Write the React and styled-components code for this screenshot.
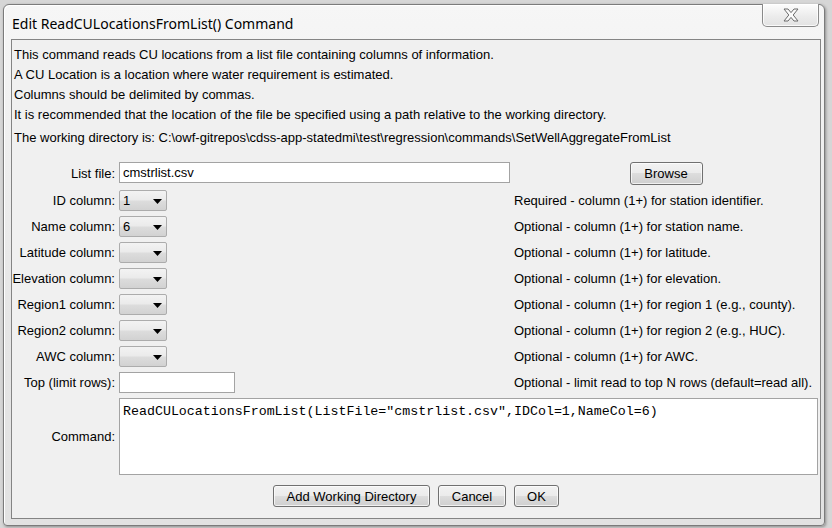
import React from 'react';
import styled, { createGlobalStyle } from 'styled-components';

const GlobalStyle = createGlobalStyle`
  html, body {
    margin: 0;
    padding: 0;
    background: #d6d6d6;
  }
  body {
    font-family: "Liberation Sans", Arial, sans-serif;
    font-size: 13px;
    color: #000;
  }
`;

const intro = [
  'This command reads CU locations from a list file containing columns of information.',
  'A CU Location is a location where water requirement is estimated.',
  'Columns should be delimited by commas.',
  'It is recommended that the location of the file be specified using a path relative to the working directory.',
];

const columns = [
  { label: 'ID column:', value: '1', desc: 'Required - column (1+) for station identifier.' },
  { label: 'Name column:', value: '6', desc: 'Optional - column (1+) for station name.' },
  { label: 'Latitude column:', value: '', desc: 'Optional - column (1+) for latitude.' },
  { label: 'Elevation column:', value: '', desc: 'Optional - column (1+) for elevation.' },
  { label: 'Region1 column:', value: '', desc: 'Optional - column (1+) for region 1 (e.g., county).' },
  { label: 'Region2 column:', value: '', desc: 'Optional - column (1+) for region 2 (e.g., HUC).' },
  { label: 'AWC column:', value: '', desc: 'Optional - column (1+) for AWC.' },
];

function CloseGlyph() {
  return (
    <svg width="16" height="14" viewBox="0 0 16 14">
      <polygon
        points="1,1 5,1 8,4.6 11,1 15,1 10.2,7 15,13 11,13 8,9.4 5,13 1,13 5.8,7"
        fill="#fbfbfb"
        stroke="#6b6b6b"
        strokeWidth="1"
        strokeLinejoin="round"
      />
    </svg>
  );
}

function ArrowDown() {
  return (
    <svg width="9" height="5" viewBox="0 0 9 5">
      <polygon points="0,0 9,0 4.5,5" fill="#000" />
    </svg>
  );
}

function Combo({ value }) {
  return (
    <ComboBox>
      <span>{value}</span>
      <ArrowDown />
    </ComboBox>
  );
}

export default function App() {
  return (
    <Screen>
      <GlobalStyle />
      <Window>
        <TitleBar>
          <Title>Edit ReadCULocationsFromList() Command</Title>
          <CloseButton>
            <CloseGlyph />
          </CloseButton>
        </TitleBar>
        <Panel>
          <Intro>
            {intro.map((line) => (
              <Line key={line}>{line}</Line>
            ))}
            <Line $gap>
              The working directory is: C:\owf-gitrepos\cdss-app-statedmi\test\regression\commands\SetWellAggregateFromList
            </Line>
          </Intro>

          <Form>
            <Label>List file:</Label>
            <TextInput $w={391} readOnly value="cmstrlist.csv" />
            <BrowseButton>Browse</BrowseButton>

            {columns.map((c) => (
              <React.Fragment key={c.label}>
                <Label>{c.label}</Label>
                <Combo value={c.value} />
                <Desc>{c.desc}</Desc>
              </React.Fragment>
            ))}

            <Label>Top (limit rows):</Label>
            <TextInput $w={116} readOnly value="" />
            <Desc>Optional - limit read to top N rows (default=read all).</Desc>

            <Label>Command:</Label>
            <CommandArea
              readOnly
              value={'ReadCULocationsFromList(ListFile="cmstrlist.csv",IDCol=1,NameCol=6)'}
            />
          </Form>

          <ButtonRow>
            <Button $w={157}>Add Working Directory</Button>
            <Button $w={68}>Cancel</Button>
            <Button $w={45}>OK</Button>
          </ButtonRow>
        </Panel>
      </Window>
    </Screen>
  );
}

const Screen = styled.div`
  width: 832px;
  height: 528px;
  box-sizing: border-box;
  padding: 4px 0 0 3px;
  overflow: hidden;
  background: #d6d6d6;
`;

const Window = styled.div`
  width: 822px;
  height: 522px;
  box-sizing: border-box;
  border: 1px solid #7b7b7b;
  border-radius: 6px 6px 4px 4px;
  background: linear-gradient(#f6f6f6, #e6e6e6 60%, #e2e2e2);
  box-shadow: 1px 1px 3px rgba(0, 0, 0, 0.35), inset 1px 1px 0 #ffffff;
  padding: 0 3px 6px 7px;
  display: flex;
  flex-direction: column;
`;

const TitleBar = styled.div`
  height: 34px;
  display: flex;
  justify-content: space-between;
  align-items: flex-start;
`;

const Title = styled.div`
  padding: 9px 0 0 1px;
  font-family: "Noto Sans", "Open Sans", sans-serif;
  font-size: 14px;
  line-height: 20px;
  color: #000;
`;

const CloseButton = styled.div`
  width: 57px;
  height: 23px;
  margin: -1px 2px 0 0;
  box-sizing: border-box;
  border: 1px solid #8a8a8a;
  border-top: none;
  border-radius: 0 0 5px 5px;
  background: linear-gradient(#fdfdfd, #ececec 55%, #e2e2e2);
  box-shadow: inset 0 0 0 1px rgba(255, 255, 255, 0.8);
  display: flex;
  align-items: center;
  justify-content: center;
`;

const Panel = styled.div`
  flex: 1;
  border: 1px solid #848484;
  background: #f0f0f0;
  display: flex;
  flex-direction: column;
`;

const Intro = styled.div`
  padding: 5px 0 0 2px;
`;

const Line = styled.div`
  height: 20px;
  line-height: 20px;
  white-space: nowrap;
  margin-top: ${(p) => (p.$gap ? '3px' : '0')};
`;

const Form = styled.div`
  margin-top: 14px;
  padding-right: 2px;
  display: grid;
  grid-template-columns: 103px 391px 1fr;
  column-gap: 4px;
  row-gap: 5px;
  align-items: start;
`;

const Label = styled.div`
  text-align: right;
  align-self: center;
  white-space: nowrap;
`;

const Desc = styled.div`
  align-self: center;
  white-space: nowrap;
`;

const TextInput = styled.input`
  width: ${(p) => p.$w}px;
  height: 21px;
  box-sizing: border-box;
  margin: 0;
  padding: 0 3px;
  border: 1px solid #a3a3a3;
  background: #fff;
  font: inherit;
  color: #000;
  outline: none;
`;

const winButton = `
  box-sizing: border-box;
  margin: 0;
  padding: 0;
  border: 1px solid #707070;
  border-radius: 3px;
  background: linear-gradient(#f2f2f2 0%, #ebebeb 50%, #dddddd 50%, #cfcfcf 100%);
  box-shadow: inset 0 0 0 1px rgba(255, 255, 255, 0.7);
  font: inherit;
  color: #000;
`;

const BrowseButton = styled.button`
  ${winButton}
  justify-self: center;
  width: 73px;
  height: 23px;
`;

const Button = styled.button`
  ${winButton}
  width: ${(p) => p.$w}px;
  height: 22px;
`;

const ComboBox = styled.div`
  width: 48px;
  height: 21px;
  box-sizing: border-box;
  border: 1px solid #acacac;
  border-radius: 2px;
  background: linear-gradient(#f3f3f3 0%, #ebebeb 45%, #dcdcdc 55%, #d2d2d2 100%);
  display: flex;
  align-items: center;
  justify-content: space-between;
  padding: 0 4px 0 3px;

  svg {
    margin-top: 1px;
  }
`;

const CommandArea = styled.textarea`
  grid-column: 2 / 4;
  height: 77px;
  box-sizing: border-box;
  margin: 0;
  padding: 5px 3px 3px;
  border: 1px solid #a3a3a3;
  background: #fff;
  resize: none;
  outline: none;
  font-family: "Liberation Mono", "DejaVu Sans Mono", monospace;
  font-size: 13.3px;
  line-height: 16px;
  color: #000;
`;

const ButtonRow = styled.div`
  margin-top: 10px;
  display: flex;
  justify-content: center;
  gap: 8px;
`;
